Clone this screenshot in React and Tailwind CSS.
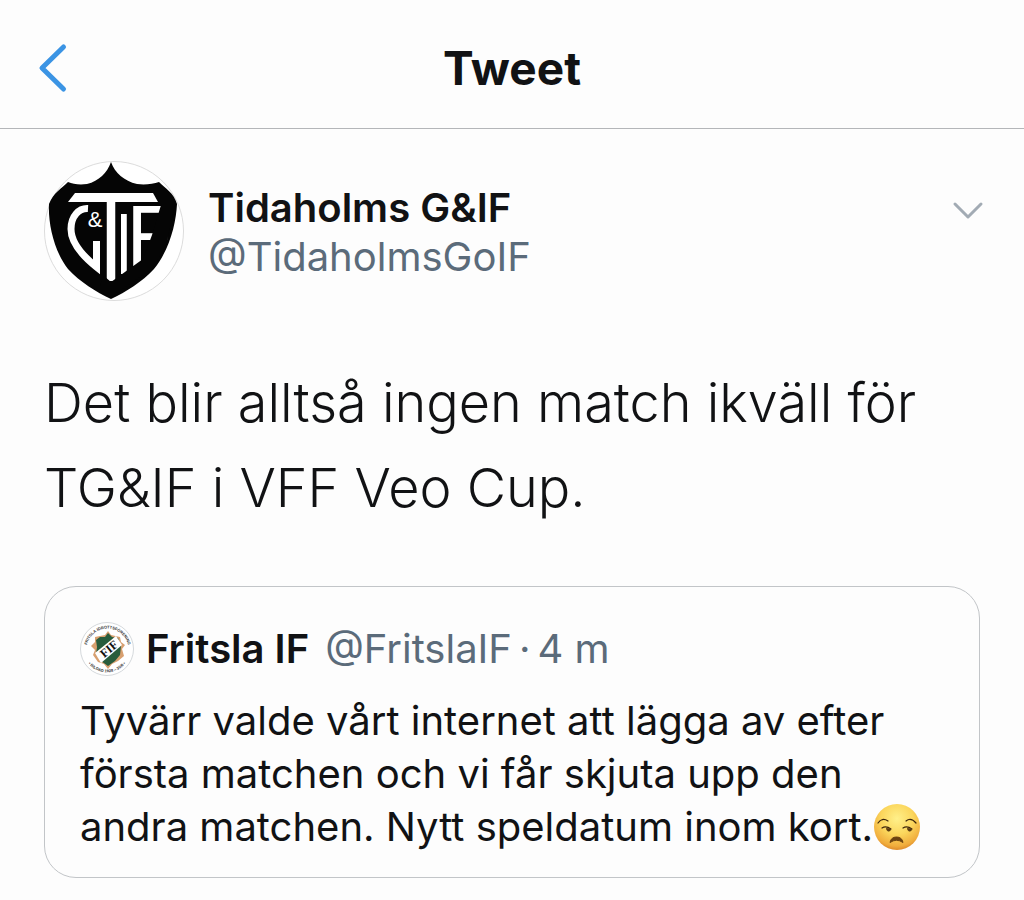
const ClubCrest = () => (
    <svg viewBox="0 0 140 140" className="size-35 shrink-0" role="img" aria-label="Tidaholms G&IF">
        <circle cx="70" cy="70" r="69.5" fill="#fff" stroke="#dcdcdc" />
        <path
            d="M67 1C71 12 80 20 93 23C101 24 109 23 115 21C121 27 130 32 133 43C132 62 126 88 110 108C98 121 82 131 67 138C52 131 36 121 24 108C10 90 4 63 5 43C9 32 18 27 24 21C29 23 35 24 43 23C55 20 63 12 67 1Z"
            fill="#050505"
        />
        {/* monogram */}
        <path d="M31 32H109L114 41H24Z" fill="#fff" />
        <path d="M44 47.5C35 47 27 55 27 68C27 82 40 96 52.500 106V80" fill="none" stroke="#fff" strokeWidth="7" />
        <g fill="#fff" fontFamily="Inter, sans-serif">
            <text x="67" y="120" fontSize="121" fontWeight="300" textAnchor="middle">T</text>
            <text x="80" y="113" fontSize="83" fontWeight="300" textAnchor="middle">I</text>
            <text x="82" y="105" fontSize="83" fontWeight="400">F</text>
        </g>
        <text x="51" y="66" fill="#fff" fontFamily="Liberation Sans, sans-serif" fontSize="22" textAnchor="middle">&amp;</text>
        {/* shield rim over the letter ends */}
        <path d="M117 44L108 74L99 98L67 121L60 115L56 124L67 136L108 108L122 84L131 44Z" fill="#050505" />
    </svg>
);

const QuotedCrest = () => (
    <svg viewBox="0 0 54 54" className="size-13.5 shrink-0" role="img" aria-label="Fritsla IF">
        <circle cx="27" cy="27" r="26.500" fill="#fff" stroke="#d5d9dc" />
        <path
            d="M28 9L31 13L40 15L41 20L45 23L42 27L44 34L38 39L32 42L28 47L24 42L18 40L13 33L15 28L11 24L15 20L15 15L25 13Z"
            fill="#d8a070"
        />
        <path d="M28 11L32 15L38 16L41 24L40 33L35 39L28 44L21 39L16 32L17 25L16 18L20 15L25 15Z" fill="#285c3c" />
        <path d="M15 31L36 14L42 23L21 41Z" fill="#fff" />
        <text
            x="29"
            y="31"
            transform="rotate(-40 29 27)"
            fontFamily="Liberation Serif, serif"
            fontSize="12"
            fontWeight="700"
            textAnchor="middle"
            fill="#111"
        >
            FIF
        </text>
        <path id="ring-top" d="M7 23A21 21 0 0 1 48 23" fill="none" />
        <path id="ring-bottom" d="M8 41A24 24 0 0 0 46 41" fill="none" />
        <g fontFamily="Liberation Sans, sans-serif" fontSize="4" fontWeight="700" fill="#333" textAnchor="middle">
            <text>
                <textPath href="#ring-top" startOffset="50%">FRITSLA IDROTTSFÖRENING</textPath>
            </text>
            <text>
                <textPath href="#ring-bottom" startOffset="50%">• BILDAD 1928 – 30/6 •</textPath>
            </text>
        </g>
    </svg>
);

const UnamusedFace = () => (
    <svg viewBox="0 0 48 48" className="inline-block size-12 align-[-10px]" role="img" aria-label="Unamused face">
        <defs>
            <radialGradient id="face" cx="50%" cy="32%" r="70%">
                <stop offset="0" stopColor="#fff08a" />
                <stop offset="0.500" stopColor="#fbd65c" />
                <stop offset="0.850" stopColor="#f0ac3c" />
                <stop offset="1" stopColor="#d98226" />
            </radialGradient>
        </defs>
        <circle cx="24" cy="24" r="23" fill="url(#face)" />
        <g fill="none" stroke="#3d260c" strokeLinecap="round">
            <path d="M5 20Q9 14 15 18" strokeWidth="1.200" />
            <path d="M33 18Q38 14 43 20" strokeWidth="1.200" />
            <path d="M9 25Q13 22.500 18 26" strokeWidth="1.200" />
            <path d="M30 25Q34 22.500 39 26" strokeWidth="1.200" />
        </g>
        <path d="M13 25L18 25.500Q18 29 15 28.500Q13 28 13 25Z" fill="#5a3a10" />
        <path d="M34 25L39 25.500Q39 29 36 28.500Q34 28 34 25Z" fill="#5a3a10" />
        <path d="M17 39.500Q18 34 23.500 34Q29 34 30 39.500Q23.500 35 17 39.500Z" fill="#6b4210" stroke="#6b4210" strokeLinejoin="round" />
    </svg>
);

const QuotedTweet = () => (
    <article className="mt-14 rounded-[32px] border border-[#c2c5c8] px-[35px] pt-[35px] pb-6">
        <header className="flex items-center">
            <QuotedCrest />
            <h2 className="ml-3 text-[40px] leading-[52px] font-semibold">Fritsla IF</h2>
            <p className="ml-4 flex gap-[7px] text-[40px] leading-[52px] text-[#5b6b7a]">
                <span>@FritslaIF</span>
                <span>·</span>
                <time>4 m</time>
            </p>
        </header>
        <p className="mt-[18px] text-[40px] leading-[53px]">
            Tyvärr valde vårt internet att lägga av efter första matchen och vi får skjuta upp den andra matchen.
            Nytt speldatum inom kort.
            <UnamusedFace />
        </p>
    </article>
);

const App = () => {
    return (
        <div className="min-h-screen bg-[#fdfdfd] font-['Inter',sans-serif] text-[#111214]">
            <header className="grid h-[129px] grid-cols-[1fr_auto_1fr] items-center border-b border-[#b4b6b9] px-9 pt-2">
                <button type="button" aria-label="Back" className="w-fit">
                    <svg viewBox="0 0 34 52" className="h-13 w-[34px]" fill="none" stroke="#3b94e4" strokeWidth="5" strokeLinecap="round" strokeLinejoin="round">
                        <path d="M27.500 5L6 26L27.500 47" />
                    </svg>
                </button>
                <h1 className="text-[46px] leading-[56px] font-bold">Tweet</h1>
            </header>

            <main className="pr-11 pb-5 pl-11">
                <div className="flex items-start pt-8">
                    <ClubCrest />
                    <div className="ml-6 pt-[22px] text-[40px] leading-[49px]">
                        <p className="font-semibold">Tidaholms G&amp;IF</p>
                        <p className="text-[#5b6b7a]">@TidaholmsGoIF</p>
                    </div>
                    <button type="button" aria-label="More options" className="-mr-1 ml-auto pt-[38px]">
                        <svg viewBox="0 0 32 24" className="h-6 w-8" fill="none" stroke="#a2abb4" strokeWidth="3" strokeLinecap="round" strokeLinejoin="round">
                            <path d="M3 5L16 18L29 5" />
                        </svg>
                    </button>
                </div>

                <p className="mt-[59px] text-[54px] leading-[85px] font-light">
                    Det blir alltså ingen match ikväll för TG&amp;IF i VFF Veo Cup.
                </p>

                <QuotedTweet />
            </main>
        </div>
    );
};

export default App;
